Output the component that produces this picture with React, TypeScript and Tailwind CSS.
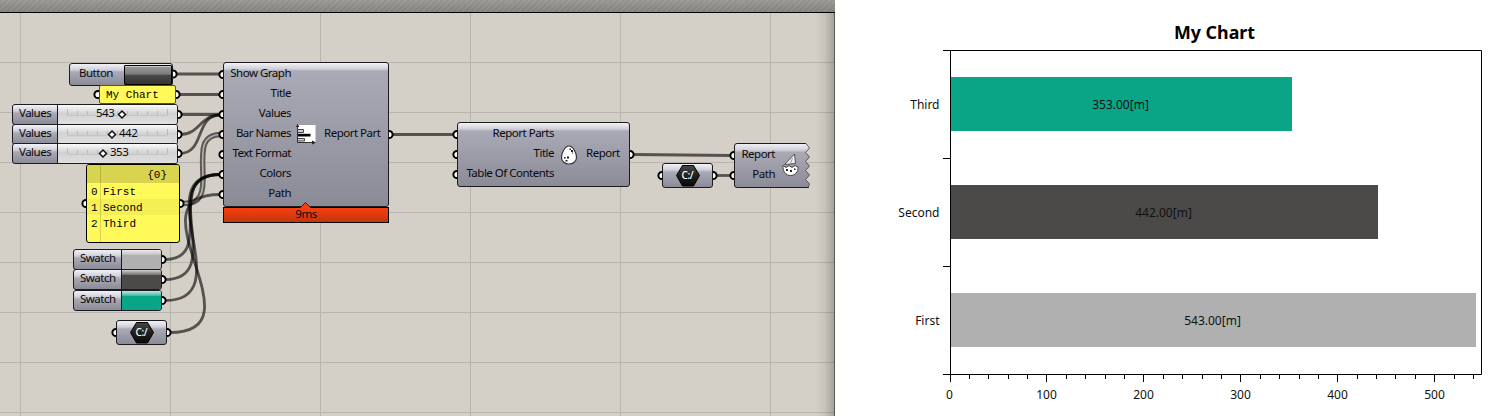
import React from "react";

const UI = "font-['Noto_Sans',sans-serif] text-[11.5px] leading-[20px] tracking-[-0.5px] text-[#0a0a0a]";
const BODY = "border border-[#1c1c20] rounded-[3px] bg-[linear-gradient(to_bottom,#f2f2f6_0px,#cfcfd9_6px,#aaaab6_8px,#8b8a97_100%)]";

function Hex() {
  return (
    <svg width="26" height="24" viewBox="0 0 26 24">
      <defs>
        <linearGradient id="hex" x1="0" y1="0" x2="0" y2="1">
          <stop offset="0" stopColor="#484848" />
          <stop offset="0.5" stopColor="#202020" />
          <stop offset="1" stopColor="#080808" />
        </linearGradient>
      </defs>
      <path d="M7.5 1.5H18.5L24.5 11.5L18.5 22H7.5L1.5 11.5Z" fill="url(#hex)" stroke="#000" strokeLinejoin="round" />
      <text x="6.5" y="15" textLength="12" fontSize="10" fontFamily="Noto Sans" fontWeight="500" fill="#fff">C:/</text>
    </svg>
  );
}

function PathParam({ pos }: { pos: string }) {
  return (
    <div className={`absolute h-[25px] w-[51px] flex items-center justify-center ${BODY} ${pos}`}>
      <Hex />
    </div>
  );
}

function Slider({ value, knob, pos, label }: { value: number; knob: number; pos: string; label: string }) {
  return (
    <div className={`absolute left-[12px] w-[166px] h-[21px] flex overflow-hidden ${BODY} ${pos}`}>
      <div className={`w-[45px] pl-[6px] border-r border-[#1c1c20] ${UI}`}>
        <div className="-mt-px leading-[18px]">Values</div>
      </div>
      <div className="relative flex-1 bg-[linear-gradient(to_bottom,#fafafa,#d2d2d2_45%,#e0e0e0)]">
        <svg className="absolute inset-0" width="120" height="19">
          <path d="M9.5 10.5H109.5" stroke="#c4c4c4" />
          {[...Array(11)].map((_, i) => (
            <path key={i} d={`M${9.5 + i * 10} ${i % 10 ? 6 : 4}V10`} stroke="#bcbcbc" />
          ))}
          <path d={`M${knob} 6L${knob + 3.5} 9.5L${knob} 13L${knob - 3.5} 9.5Z`} fill="#fff" stroke="#111" strokeWidth="1.5" />
        </svg>
        <div className={`absolute top-0 ${UI} ${label}`}>
          <div className="-mt-px leading-[18px]">{value}</div>
        </div>
      </div>
    </div>
  );
}

function Swatch({ pos, color }: { pos: string; color: string }) {
  return (
    <div className={`absolute left-[73px] w-[89px] h-[21px] flex overflow-hidden ${BODY} ${pos}`}>
      <div className={`w-[48px] pl-[6px] border-r border-[#1c1c20] ${UI}`}>
        <div className="-mt-px leading-[18px]">Swatch</div>
      </div>
      <div className={`flex-1 ${color}`}>
        <div className="h-[5px] bg-[linear-gradient(to_bottom,rgba(255,255,255,.75),rgba(255,255,255,.2))]" />
      </div>
    </div>
  );
}

const wires = [
  "M175 74H220", "M178 94.5H220", "M180 114.5H220",
  "M180 134.5C200 134.5 200 115 220 115", "M180 153.5C205 153.5 195 115 220 115",
  "M165 259.5C218 259.5 161 174.5 220 174.5", "M165 279.500C229 279.500 154 174.500 220 174.500",
  "M165 300.5C242 300.5 144 174.5 220 174.5", "M170 332.5C264 332.5 126 194.5 220 194.5",
  "M392 134.5H455", "M633 154.5L732 155.5", "M716 175.5H732",
];

const grips = [
  [173, 74], [98, 94.5], [176, 94.5], [178, 114.5], [178, 134.5], [178, 153.5],
  [86, 203.5], [180, 203.5], [162, 259.5], [162, 279.5], [162, 300.5], [116, 332.5], [167, 332.5],
  [223, 74.5], [223, 94.5], [223, 114.5], [223, 134.5], [223, 154.5], [223, 174.5], [223, 194.5], [389, 134.5],
  [457, 134.5], [457, 154.5], [457, 174.5], [630, 154.5], [662, 175.5], [713, 175.5], [734, 155.5], [734, 175.5],
];

const NAMES_WIRE = "M182 203.5C195 203.5 203 201 203 180C203 156 198 134.5 221 134.5";

function Wires() {
  return (
    <svg className="absolute inset-0" width="835" height="416">
      <path d={NAMES_WIRE} fill="none" stroke="#5c5a56" strokeWidth="5.5" />
      <path d={NAMES_WIRE} fill="none" stroke="#b5b2aa" strokeWidth="1.6" />
      {wires.map((d) => <path key={d} d={d} fill="none" stroke="#000" strokeOpacity="0.6" strokeWidth="2.8" />)}
      {grips.map(([x, y]) => <circle key={`${x}-${y}`} cx={x} cy={y} r="3.6" fill="#fff" stroke="#000" strokeWidth="2" />)}
    </svg>
  );
}

function ChartIcon() {
  return (
    <svg width="20" height="22" viewBox="0 0 20 22">
      <path d="M2 1H19.500V19H2Z" fill="#fff" />
      <path d="M1.5 3V18.5H17" fill="none" stroke="#333" />
      <path d="M0 3L1.5 0L3.5 3ZM16 16.5L20 18.5L16 20.5Z" fill="#222" />
      <path d="M2 5.5H7.5V8.5H2M2 14.5H8.5V17H2" fill="#ccc" stroke="#444" />
      <path d="M2 9.8H14.500V12.500H2Z" fill="#000" />
    </svg>
  );
}

function EggIcon() {
  return (
    <svg width="18" height="20" viewBox="0 0 18 20">
      <path d="M9 1C5 1 1.5 8 1.5 12.5C1.5 16.5 5 19 9 19S16.5 16.5 16.5 12.5C16.5 8 13 1 9 1Z" fill="#fff" stroke="#333" strokeWidth="1.2" />
      <path d="M9.500 3.500h1.500v1.500H9.500zM11 5h2v2h-2zM4 12h1.500v1.500H4zM7 11.500h2v2H7zM5.500 15h2v1.500h-2zM12 7.500h1v1h-1z" fill="#222" />
    </svg>
  );
}

function HatchIcon() {
  return (
    <svg width="20" height="24" viewBox="0 0 20 24">
      <path d="M13.500 1L3.500 11.500L14.500 10.500Z" fill="#eee" stroke="#555" />
      <path d="M11.500 5L9.500 10" stroke="#999" />
      <path d="M2 12.500L5 14.500L8 12.500L11 14.500L14 12.500L17 14C17.500 19 14 22.500 9.500 22.500S1.500 18.500 2 12.500Z" fill="#fff" stroke="#444" />
      <path d="M5 16h2v2H5zM9 17h2v2H9zM13 15.500h1.500v1.500H13z" fill="#222" />
    </svg>
  );
}

function Canvas() {
  return (
    <section className="relative w-[835px] h-[416px] shrink-0 overflow-hidden bg-[#d4d0c8]">
      <svg className="absolute inset-0" width="835" height="416">
        {[20, 170, 320, 470, 620, 770].map((x) => <path key={x} d={`M${x + 0.5} 13V416`} stroke="#b8b5ae" />)}
        {[62, 112, 162, 212, 262, 312, 362, 412].map((y) => <path key={y} d={`M0 ${y + 0.5}H835`} stroke="#b8b5ae" />)}
      </svg>
      <div className="relative h-[13px] border-b border-black bg-[linear-gradient(to_bottom,rgba(255,255,255,.06),rgba(0,0,0,.1)),repeating-linear-gradient(135deg,#8f8e89_0px,#8f8e89_2px,#9a9892_2px,#9a9892_4px)]" />
      <div className="absolute right-0 top-[13px] bottom-0 w-[20px] border-r border-[#5a5955] bg-[linear-gradient(to_right,transparent,rgba(0,0,0,.06)_50%,rgba(0,0,0,.22))]" />
      <Wires />

      <div className={`absolute left-[69px] top-[63px] w-[104px] h-[23px] flex items-center justify-between pl-[9px] ${BODY} ${UI}`}>
        <span className="-mt-[3px]">Button</span>
        <span className="w-[48px] h-[20px] border border-black rounded-[1px] bg-[linear-gradient(to_bottom,#9a9a9a,#7c7c7c_45%,#484848_52%,#343434)] shadow-[inset_0_1px_0_0_#ccc]" />
      </div>
      <div className="absolute left-[99px] top-[85px] w-[77px] h-[19px] rounded-[2px] border border-[#55531c] bg-[#fffa5a] pl-[6px] font-['Liberation_Mono',monospace] text-[11px] leading-[18px]">My Chart</div>

      <Slider pos="top-[104px]" value={543} knob={64} label="left-[38px]" />
      <Slider pos="top-[124px]" value={442} knob={54} label="left-[61px]" />
      <Slider pos="top-[143px]" value={353} knob={45} label="left-[52px]" />

      <div className="absolute left-[86px] top-[164px] w-[94px] h-[79px] rounded-[3px] border border-black bg-[#fffa5a] overflow-hidden font-['Liberation_Mono',monospace] text-[11px]">
        <div className="h-[18px] bg-[#d9d44f] text-right pr-[12px] leading-[20px]">{"{0}"}</div>
        {["First", "Second", "Third"].map((name, i) => (
          <div key={name} className={`flex h-[16px] leading-[18px] ${i === 1 ? "bg-[#f5ef56]" : "bg-[#fffa5a]"}`}>
            <span className="w-[13px] pl-[4px]">{i}</span>
            <span className="pl-[3px]">{name}</span>
          </div>
        ))}
        <div className="absolute left-[13px] top-0 bottom-0 w-px bg-black/15" />
      </div>

      <Swatch pos="top-[249px]" color="bg-[#b0b0b0]" />
      <Swatch pos="top-[269px]" color="bg-[#4b4a48]" />
      <Swatch pos="top-[290px]" color="bg-[#0aa587]" />
      <PathParam pos="left-[116px] top-[320px]" />

      <div className={`absolute left-[223px] top-[62px] w-[166px] h-[145px] flex items-center ${BODY} ${UI}`}>
        <div className="w-[67px] pb-[3px] flex flex-col items-end whitespace-nowrap">
          {["Show Graph", "Title", "Values", "Bar Names", "Text Format", "Colors", "Path"].map((t) => <span key={t}>{t}</span>)}
        </div>
        <div className="w-[33px] pl-[5px]"><ChartIcon /></div>
        <span className="whitespace-nowrap pb-[3px]">Report Part</span>
      </div>
      <div className={`absolute left-[223px] top-[207px] w-[166px] h-[16px] border border-black bg-[linear-gradient(to_bottom,#f6400f,#c2350e)] text-center ${UI}`}>
        <div className="-mt-[1px] leading-[14px]">9ms</div>
      </div>
      <svg className="absolute left-[299px] top-[202px]" width="13" height="7"><path d="M1 6L6.5 0.5L12 6V7H1Z" fill="#f6400f" /><path d="M1 6L6.5 0.5L12 6" fill="none" stroke="#222" /></svg>

      <div className={`absolute left-[457px] top-[122px] w-[173px] h-[65px] flex items-center ${BODY} ${UI}`}>
        <div className="w-[96px] pb-[3px] flex flex-col items-end whitespace-nowrap">
          {["Report Parts", "Title", "Table Of Contents"].map((t) => <span key={t}>{t}</span>)}
        </div>
        <div className="w-[32px] pl-[6px]"><EggIcon /></div>
        <span className="pb-[3px]">Report</span>
      </div>

      <PathParam pos="left-[662px] top-[163px]" />
      <div className={`absolute left-[734px] top-[143px] w-[77px] h-[45px] ${UI}`}>
        <svg className="absolute inset-0" width="77" height="45">
          <defs><linearGradient id="torn" x1="0" y1="0" x2="0" y2="1"><stop offset="0" stopColor="#f0f0f4" /><stop offset="0.15" stopColor="#d0d0d9" /><stop offset="0.2" stopColor="#aaaab5" /><stop offset="1" stopColor="#8b8a97" /></linearGradient></defs>
          <path d="M3 0.5H72L75.5 5L71.5 9.5L75.5 14L71.5 18.5L75.5 23L71.5 27.5L75.5 32L71.5 36.5L75.5 41L74 44.5H3Q0.5 44.5 0.5 42V3Q0.5 0.5 3 0.5Z" fill="url(#torn)" />
          <path d="M72 0.5H3Q0.5 0.5 0.5 3V42Q0.5 44.5 3 44.5H75" fill="none" stroke="#1c1c20" />
          <path d="M72 0.5L75.5 5L71.5 9.5L75.5 14L71.5 18.5L75.5 23L71.5 27.5L75.5 32L71.5 36.5L75.5 41L74 44.5" fill="none" stroke="#55555c" />
        </svg>
        <div className="relative flex items-center pt-[1px]">
          <div className="w-[41px] flex flex-col items-end"><span>Report</span><span>Path</span></div>
          <div className="pl-[6px] pt-[2px]"><HatchIcon /></div>
        </div>
      </div>
    </section>
  );
}

const bars = [
  { name: "Third", y: 77, width: 342, fill: "#0aa587", value: "353.00[m]", x: 1120.5 },
  { name: "Second", y: 185, width: 428, fill: "#4b4a48", value: "442.00[m]", x: 1163.5 },
  { name: "First", y: 293, width: 526, fill: "#b0b0b0", value: "543.00[m]", x: 1212.5 },
];

function Chart() {
  return (
    <svg className="shrink-0 bg-white font-['Noto_Sans',sans-serif] text-[12px]" width="677" height="416" viewBox="835 0 677 416">
      <text x="1214.5" y="39" textAnchor="middle" fontSize="18" fontWeight="700" textLength="81" lengthAdjust="spacingAndGlyphs">My Chart</text>
      {bars.map((b) => (
        <g key={b.name} fill="#111">
          <rect x="950" y={b.y} width={b.width} height="54" fill={b.fill} />
          <text x={b.x} y={b.y + 31.5} textAnchor="middle">{b.value}</text>
          <text x="939.5" y={b.y + 31.5} textAnchor="end">{b.name}</text>
        </g>
      ))}
      <path d="M943 50.5H1481.5V374.5H943M950.5 50V382M943 158.5H950M943 266.5H950" fill="none" stroke="#000" />
      {[...Array(28)].map((_, i) => (
        <path key={i} d={`M${Math.floor(950 + i * 19.39) + 0.5} 374V${i % 5 ? 379 : 382}`} stroke="#000" />
      ))}
      {[0, 100, 200, 300, 400, 500].map((n) => (
        <text key={n} x={949.5 + n * 0.97} y="399" textAnchor="middle" fill="#111">{n}</text>
      ))}
    </svg>
  );
}

export default function App() {
  return (
    <main className="flex w-[1512px] h-[416px] overflow-hidden bg-white">
      <Canvas />
      <Chart />
    </main>
  );
}
